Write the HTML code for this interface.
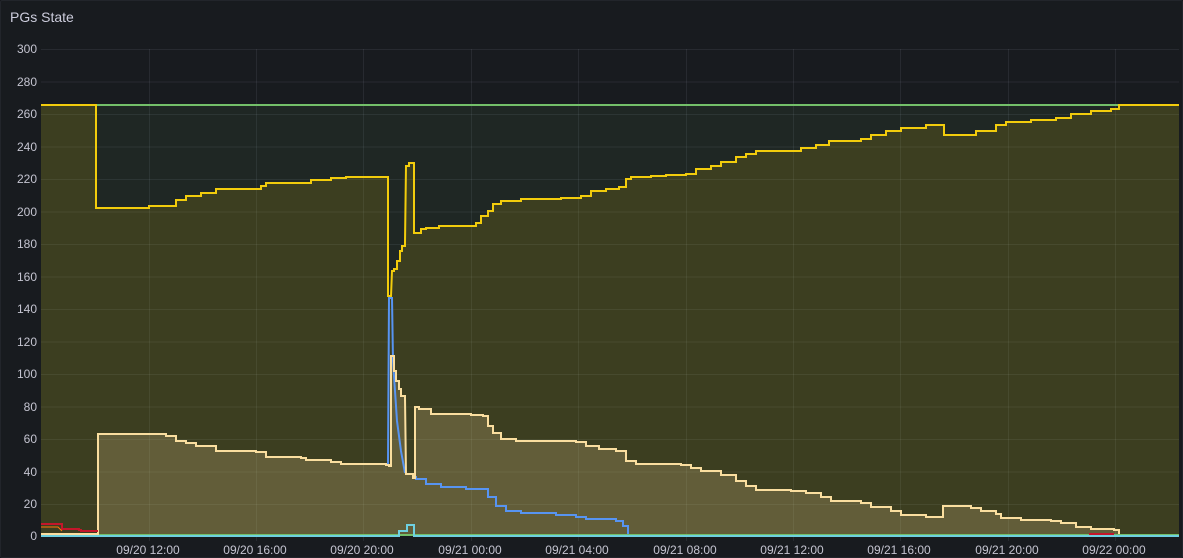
<!DOCTYPE html>
<html><head><meta charset="utf-8"><style>
html,body{margin:0;padding:0;background:#111217;}
.p{position:absolute;left:0;top:0;width:1181px;height:556px;background:#181b1f;border:1px solid #22252b;border-radius:2px;overflow:hidden;font-family:"Liberation Sans",sans-serif;}
.t{position:absolute;left:9px;top:8px;font-size:14px;color:#ccccdc;}
svg{position:absolute;left:0;top:0}
text{font-family:"Liberation Sans",sans-serif;font-size:12px;fill:#c4c4d0}
</style></head><body><div class="p"><div class="t">PGs State</div>
<svg width="1183" height="558">
<g stroke="rgba(204,204,220,0.09)" stroke-width="1">
<line x1="40" x2="1178" y1="48.5" y2="48.5"/><line x1="40" x2="1178" y1="81" y2="81"/><line x1="40" x2="1178" y1="113.5" y2="113.5"/><line x1="40" x2="1178" y1="146" y2="146"/><line x1="40" x2="1178" y1="178.5" y2="178.5"/><line x1="40" x2="1178" y1="211" y2="211"/><line x1="40" x2="1178" y1="243.5" y2="243.5"/><line x1="40" x2="1178" y1="276" y2="276"/><line x1="40" x2="1178" y1="308.5" y2="308.5"/><line x1="40" x2="1178" y1="341" y2="341"/><line x1="40" x2="1178" y1="373.5" y2="373.5"/><line x1="40" x2="1178" y1="406" y2="406"/><line x1="40" x2="1178" y1="438.5" y2="438.5"/><line x1="40" x2="1178" y1="471" y2="471"/><line x1="40" x2="1178" y1="503.5" y2="503.5"/>
<line y1="48" y2="540" x1="148.5" x2="148.5"/><line y1="48" y2="540" x1="255.5" x2="255.5"/><line y1="48" y2="540" x1="362.5" x2="362.5"/><line y1="48" y2="540" x1="470.5" x2="470.5"/><line y1="48" y2="540" x1="577.5" x2="577.5"/><line y1="48" y2="540" x1="685.5" x2="685.5"/><line y1="48" y2="540" x1="792.5" x2="792.5"/><line y1="48" y2="540" x1="899.5" x2="899.5"/><line y1="48" y2="540" x1="1007.5" x2="1007.5"/><line y1="48" y2="540" x1="1114.5" x2="1114.5"/>
</g>
<g text-anchor="end">
<text x="36" y="52">300</text><text x="36" y="85">280</text><text x="36" y="117">260</text><text x="36" y="150">240</text><text x="36" y="182">220</text><text x="36" y="215">200</text><text x="36" y="247">180</text><text x="36" y="280">160</text><text x="36" y="312">140</text><text x="36" y="345">120</text><text x="36" y="377">100</text><text x="36" y="410">80</text><text x="36" y="442">60</text><text x="36" y="475">40</text><text x="36" y="507">20</text><text x="36" y="539">0</text>
</g>
<g text-anchor="middle">
<text x="147" y="553">09/20 12:00</text><text x="254" y="553">09/20 16:00</text><text x="361" y="553">09/20 20:00</text><text x="469" y="553">09/21 00:00</text><text x="576" y="553">09/21 04:00</text><text x="684" y="553">09/21 08:00</text><text x="791" y="553">09/21 12:00</text><text x="898" y="553">09/21 16:00</text><text x="1006" y="553">09/21 20:00</text><text x="1113" y="553">09/22 00:00</text>
</g>
<rect x="40" y="104" width="1138" height="431" fill="rgba(115,191,105,0.08)"/>
<polygon class="st" fill="rgba(242,204,12,0.14)" points="40,104 95,104 95,207 145,207 148,205 165,205 175,199 185,195 200,192 215,188 260,185 265,182 305,182 310,179 330,177 345,176 387,175 387,295 390,295 391,270 393,268 396,260 399,250 401,245 404,241 405,165 408,162 413,162 413,232 418,232 420,228 425,227 438,225 458,225 475,222 480,215 487,210 492,203 500,200 515,200 520,198 560,197 580,195 590,190 605,188 618,186 625,178 630,176 650,175 665,174 685,173 695,168 710,165 720,161 735,156 745,153 755,150 785,150 800,147 815,144 828,140 860,138 870,134 885,130 900,127 925,124 940,124 943,134 965,134 975,130 995,124 1005,121 1030,119 1055,117 1070,113 1090,110 1110,108 1118,104 1178,104 1178,535 40,535"/>
<polygon class="st" fill="rgba(250,222,160,0.2)" points="40,533 95,533 97,433 160,433 165,435 175,440 185,442 195,445 215,450 255,451 265,456 300,457 305,459 330,461 340,463 385,464 388,465 390,355 393,370 395,380 398,388 400,395 404,397 405,473 412,477 414,406 418,408 430,413 470,414 482,415 487,425 492,432 500,438 515,440 575,441 585,445 598,448 615,450 625,460 635,463 680,464 690,467 700,470 720,474 735,480 745,485 755,489 790,490 805,492 820,496 830,500 860,502 870,506 890,510 900,514 925,516 940,516 942,505 962,505 970,507 980,510 995,513 1000,517 1020,519 1050,520 1060,522 1075,526 1090,528 1113,529 1118,533 1178,533 1178,535 40,535"/>
<g fill="none" stroke-width="2" stroke-linejoin="miter">
<polyline stroke="#73bf69" points="95,104 1178,104"/>
<polyline stroke="#73bf69" points="40,534 1178,534"/>
<polyline stroke="#5794f2" points="385,464 387,464 388,297 391,297 392,360 396,420 400,450 404,472"/>
<polyline class="st" stroke="#5794f2" points="412,476 415,478 425,483 440,486 465,488 480,488 487,496 495,505 505,510 520,512 555,514 575,516 585,518 615,520 622,525 627,533"/>
<polyline class="st" stroke="#fade9f" points="40,533 95,533 97,433 160,433 165,435 175,440 185,442 195,445 215,450 255,451 265,456 300,457 305,459 330,461 340,463 385,464 388,465 390,355 393,370 395,380 398,388 400,395 404,397 405,473 412,477 414,406 418,408 430,413 470,414 482,415 487,425 492,432 500,438 515,440 575,441 585,445 598,448 615,450 625,460 635,463 680,464 690,467 700,470 720,474 735,480 745,485 755,489 790,490 805,492 820,496 830,500 860,502 870,506 890,510 900,514 925,516 940,516 942,505 962,505 970,507 980,510 995,513 1000,517 1020,519 1050,520 1060,522 1075,526 1090,528 1113,529 1118,533"/>
<polyline class="st" stroke="#f2cc0c" points="40,104 95,104 95,207 145,207 148,205 165,205 175,199 185,195 200,192 215,188 260,185 265,182 305,182 310,179 330,177 345,176 387,175 387,295 390,295 391,270 393,268 396,260 399,250 401,245 404,241 405,165 408,162 413,162 413,232 418,232 420,228 425,227 438,225 458,225 475,222 480,215 487,210 492,203 500,200 515,200 520,198 560,197 580,195 590,190 605,188 618,186 625,178 630,176 650,175 665,174 685,173 695,168 710,165 720,161 735,156 745,153 755,150 785,150 800,147 815,144 828,140 860,138 870,134 885,130 900,127 925,124 940,124 943,134 965,134 975,130 995,124 1005,121 1030,119 1055,117 1070,113 1090,110 1110,108 1118,104 1178,104"/>
<polyline class="st" stroke="#c4162a" points="40,523 57,523 61,528 78,529 80,530 96,531"/>
<polyline stroke="#ff780a" stroke-width="1" points="40,526 57,526 61,530"/>
<polyline stroke="#c4162a" points="1088,533 1113,533"/>
<polyline stroke="#6ed0e0" points="40,535 398,535 398,530 406,530 406,524 413,524 413,535 1178,535"/>
</g>
</svg></div>
<script>
document.querySelectorAll('.st').forEach(function(el){
  var pts=el.getAttribute('points').trim().split(/\s+/).map(function(p){return p.split(',').map(Number);});
  var out=[pts[0]];
  for(var i=1;i<pts.length;i++){var a=pts[i-1],b=pts[i];
    if(a[0]!==b[0]&&a[1]!==b[1]&&Math.abs(b[0]-a[0])>1){out.push([b[0],a[1]]);}
    out.push(b);}
  el.setAttribute('points',out.map(function(p){return p.join(',');}).join(' '));
});
</script>
</body></html>
